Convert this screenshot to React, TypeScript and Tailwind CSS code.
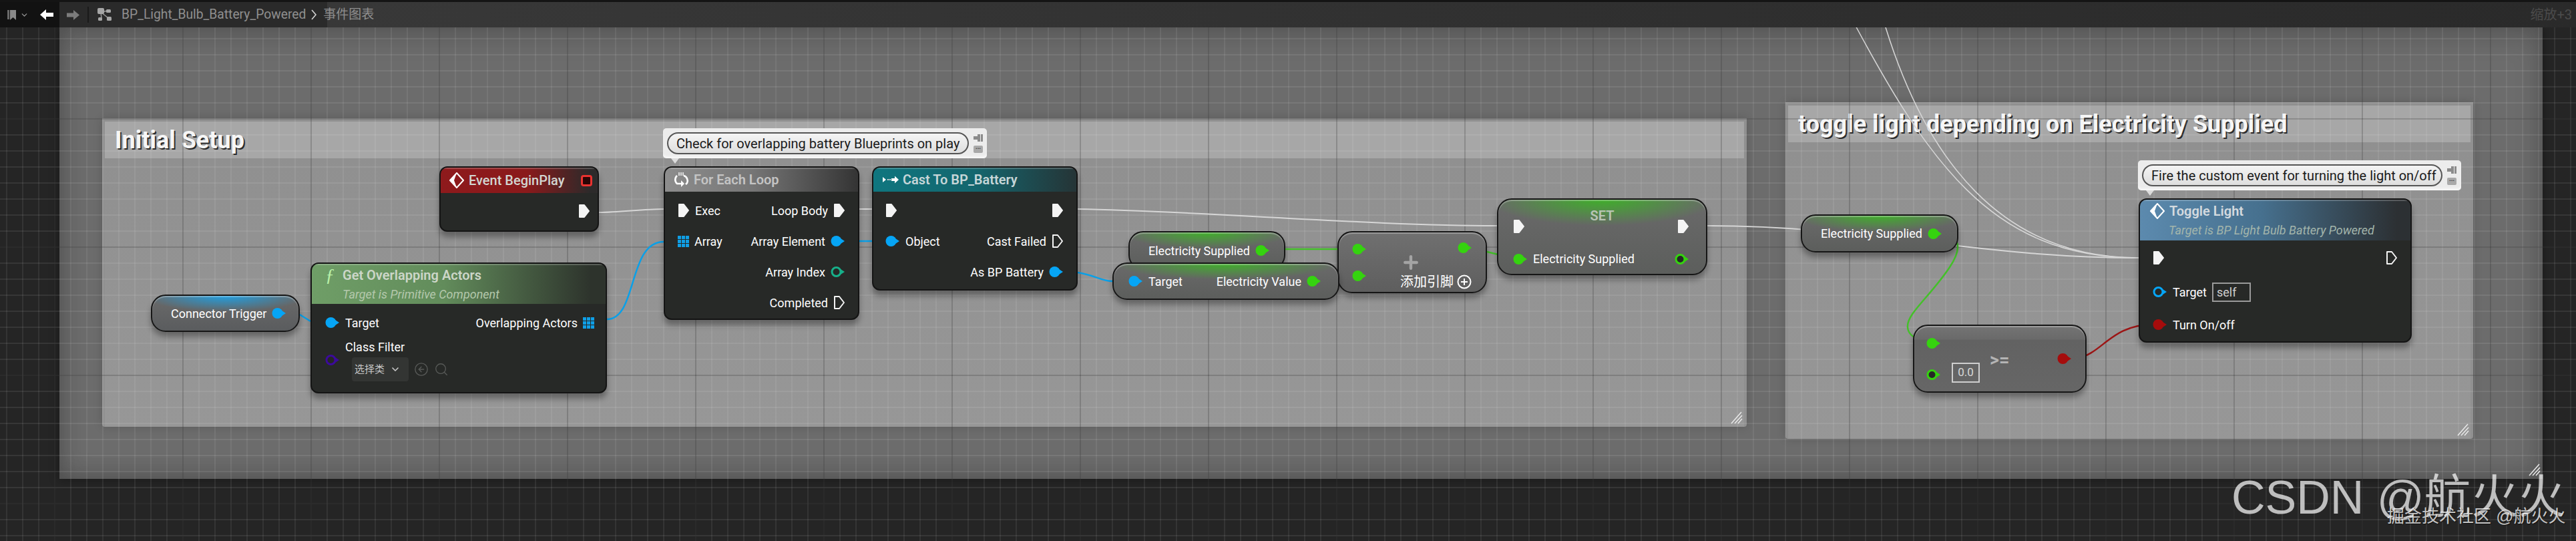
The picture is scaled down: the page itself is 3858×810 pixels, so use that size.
import type { ReactNode } from 'react'
import { CircleArrowLeft, Search, ChevronDown, Plus } from 'lucide-react'

const GREEN = '#35d30f'
const BLUE = '#06a5f5'

const ExecPin = ({ hollow = false }: { hollow?: boolean }) => (
  <svg width="18" height="22" viewBox="0 0 18 22" className="shrink-0">
    <path
      d="M2 2 H9 L16 11 L9 20 H2 Z"
      fill={hollow ? 'none' : '#f4f4f4'}
      stroke="#f4f4f4"
      strokeWidth="2"
      strokeLinejoin="round"
    />
  </svg>
)

const DataPin = ({ color, hollow = false }: { color: string; hollow?: boolean }) => (
  <svg width="22" height="18" viewBox="0 0 22 18" className="shrink-0">
    <path d="M15 5 L21 9 L15 13 Z" fill={color} />
    <circle
      cx="8.5"
      cy="9"
      r={hollow ? 6.5 : 8}
      fill={hollow ? '#262826' : color}
      stroke={hollow ? color : 'none'}
      strokeWidth={hollow ? 3 : 0}
    />
  </svg>
)

const ArrayPin = () => (
  <svg width="17" height="17" viewBox="0 0 17 17" className="shrink-0">
    {[0, 6, 12].map((x) =>
      [0, 6, 12].map((y) => (
        <rect key={`${x}-${y}`} x={x} y={y} width="5" height="5" fill="#0f9fe6" />
      )),
    )}
  </svg>
)

const EventIcon = () => (
  <svg width="22" height="24" viewBox="0 0 22 24" className="shrink-0">
    <path d="M11 1 L21 12 L11 23 L1 12 Z" fill="none" stroke="#fff" strokeWidth="2" />
    <path d="M11 1 L1 12 L11 23 L7 12 Z" fill="#fff" />
  </svg>
)

const LoopIcon = () => (
  <svg width="24" height="24" viewBox="0 0 24 24" className="shrink-0">
    <path d="M5 6 A8 8 0 0 0 5 18 L12 18" fill="none" stroke="#fff" strokeWidth="2.6" />
    <path d="M15 6 A8 8 0 0 1 20 17 L18 19" fill="none" stroke="#fff" strokeWidth="2.6" />
    <path d="M11 13 L16 18 L11 23 Z" fill="#fff" />
    <path d="M8 1 V6 M11 1 V6 M14 1 V6" stroke="#fff" strokeWidth="1.4" />
  </svg>
)

const CastIcon = () => (
  <svg width="24" height="14" viewBox="0 0 24 14" className="shrink-0">
    <path d="M0 3 L5 7 L0 11 Z" fill="#fff" />
    <path d="M7 6 H9 V8 H7 Z M10 6 H12 V8 H10 Z" fill="#ddd" />
    <path d="M13 5 H18 V1.5 L24 7 L18 12.5 V9 H13 Z" fill="#fff" />
  </svg>
)

const Delegate = () => (
  <span className="ml-auto mr-[8px] h-[17px] w-[17px] rounded-[4px] border-[3px] border-[#e8322f] bg-[#2a0505]" />
)

const Resize = ({ className }: { className: string }) => (
  <svg width="18" height="20" viewBox="0 0 18 20" className={`absolute ${className}`}>
    <path d="M1 19 L16 2 M6 19 L17 7 M11 19 L17 12" stroke="#e8e8e8" strokeWidth="1.6" />
  </svg>
)

const Node = ({ className, children }: { className: string; children: ReactNode }) => (
  <div
    className={`absolute flex flex-col overflow-hidden rounded-[12px] border-2 border-[#141414] bg-[#272927] shadow-[0_8px_9px_rgba(0,0,0,0.32)] ${className}`}
  >
    {children}
  </div>
)

const Header = ({ className, children }: { className: string; children: ReactNode }) => (
  <div
    className={`flex shrink-0 flex-col justify-center font-semibold text-[20px] text-[#d2d6d2] shadow-[inset_0_2px_1px_rgba(255,255,255,0.22)] ${className}`}
  >
    {children}
  </div>
)

const Row = ({ className = '', children }: { className?: string; children: ReactNode }) => (
  <div className={`flex h-[46px] items-center gap-[8px] ${className}`}>{children}</div>
)

const Pure = ({ className, children }: { className: string; children: ReactNode }) => (
  <div
    className={`absolute flex items-center rounded-[22px] border-2 border-[#161616] text-white shadow-[0_7px_8px_rgba(0,0,0,0.32),inset_0_2px_1px_rgba(255,255,255,0.3)] ${className}`}
  >
    {children}
  </div>
)

const Bubble = ({ className, pill, text }: { className: string; pill: string; text: string }) => (
  <div
    className={`absolute z-10 flex items-center rounded-[5px] bg-[#ececec] pl-[6px] shadow-[inset_0_-3px_3px_rgba(255,255,255,0.6)] after:absolute after:left-[12px] after:top-full after:h-0 after:w-0 after:border-x-[6px] after:border-t-[8px] after:border-x-transparent after:border-t-[#dcdcdc] ${className}`}
  >
    <div
      className={`flex h-[33px] items-center whitespace-nowrap rounded-full border-2 border-[#555] bg-[linear-gradient(#f4f4f4,#dedede)] pl-[12px] text-[20px] text-[#1a1a1a] ${pill}`}
    >
      {text}
    </div>
    <div className="ml-[7px] flex flex-col gap-[6px]">
      <svg width="14" height="11" viewBox="0 0 14 11">
        <path d="M0 3 L6 3 L6 0 L10 0 L10 11 L6 11 L6 8 L0 8 Z M11 0 H14 V11 H11 Z" fill="#8b8b8b" />
      </svg>
      <span className="flex h-[11px] w-[14px] items-center justify-center rounded-[2px] bg-[#a9a9a9] text-[8px] leading-none text-[#444]">
        •••
      </span>
    </div>
  </div>
)

const Comment = ({
  className,
  title,
  children,
}: {
  className: string
  title: string
  children?: ReactNode
}) => (
  <div
    className={`absolute rounded-b-[4px] border-t-[5px] border-x-[4px] border-[#909090] bg-[linear-gradient(#8f8f8f,#979797)] shadow-[0_0_14px_rgba(0,0,0,0.16)] ${className}`}
  >
    <div className="flex h-[55px] items-center bg-[#a7a7a7] pl-[15px] font-bold text-[36px] text-[#f6f6f6] [text-shadow:2px_2px_0_#2a2a2a]">
      {title}
    </div>
    {children}
  </div>
)

const Wires = () => (
  <svg width="3858" height="810" viewBox="0 0 3858 810" fill="none" className="absolute left-0 top-0">
    <g stroke="#d6d6d6" strokeWidth="2">
      <path d="M897 318 C930 318 960 313 994 313" />
      <path d="M1287 313 H1306" />
      <path d="M1614 313 C1800 316 2050 338 2242 338" />
      <path d="M2557 338 C2800 338 2960 386 3203 386" />
      <path d="M2760 3 C2885 240 2980 386 3203 386" strokeWidth="1.5" />
      <path d="M2813 3 C2880 250 3005 386 3203 386" strokeWidth="1.5" />
    </g>
    <g stroke="#0aa0e8" strokeWidth="2.5">
      <path d="M449 471 L465 481" />
      <path d="M909 478 C955 478 940 362 994 362" />
      <path d="M1287 361 H1306" />
      <path d="M1614 408 C1640 412 1650 421 1666 421" />
    </g>
    <g stroke="#44c02a" strokeWidth="2.5">
      <path d="M1925 373 H2031" />
      <path d="M1971 422 C2000 420 2010 413 2031 413" />
      <path d="M2194 370 C2230 375 2240 384 2273 384" />
      <path d="M2905 349 C2935 352 2940 370 2920 400 C2890 445 2855 470 2857 490 C2858 505 2875 510 2892 512" />
    </g>
    <path d="M3109 537 C3150 530 3160 486 3225 486" stroke="#9c1515" strokeWidth="2.5" />
  </svg>
)

const Toolbar = () => (
  <div className="absolute inset-x-0 top-0 z-20 flex h-[41px] items-center border-t-[3px] border-[#141414] bg-[linear-gradient(90deg,#2a2a2a_0%,#2a2a2a_12.7%,#383838_12.7%,#303030_60%,#2a2a2a_100%)] text-[#8f8f8f]">
    <div className="flex h-full w-[89px] shrink-0 items-center bg-[#121212] pl-[11px]">
      <svg width="13" height="17" viewBox="0 0 13 17">
        <path d="M0 1 H3 V15 H0 Z" fill="#6a6a6a" />
        <path d="M4 1 H13 V16 L8.5 12 L4 16 Z" fill="#8a8a8a" />
      </svg>
      <ChevronDown size={13} strokeWidth={2.4} className="ml-[6px] text-[#9a9a9a]" />
    </div>
    <svg width="20" height="16" viewBox="0 0 20 16" className="-ml-[29px] shrink-0">
      <path d="M9 0 V5 H20 V11 H9 V16 L0 8 Z" fill="#fff" />
    </svg>
    <svg width="19" height="15" viewBox="0 0 19 15" className="ml-[20px] shrink-0">
      <path d="M10 0 V4.5 H0 V10.5 H10 V15 L19 7.5 Z" fill="#7c7c7c" />
    </svg>
    <span className="ml-[12px] h-[24px] w-[2px] bg-[#1a1a1a]" />
    <svg width="21" height="20" viewBox="0 0 21 20" className="ml-[13px] shrink-0">
      <path d="M5 6 L16 4 M5 6 L6 16 M5 6 L16 15" stroke="#9a9a9a" strokeWidth="1.5" />
      <rect x="0" y="0" width="10" height="9" rx="2" fill="#a6a6a6" />
      <rect x="13" y="2" width="7" height="5" rx="1.5" fill="#a6a6a6" />
      <rect x="1" y="14" width="6" height="5" rx="1.5" fill="#a6a6a6" />
      <rect x="14" y="13" width="7" height="6" rx="1.5" fill="#a6a6a6" />
    </svg>
    <span className="ml-[15px] text-[19.3px]">BP_Light_Bulb_Battery_Powered</span>
    <svg width="10" height="20" viewBox="0 0 10 20" className="ml-[7px] shrink-0">
      <path d="M2 3 L8 10 L2 17" fill="none" stroke="#d4d4d4" strokeWidth="1.6" />
    </svg>
    <span className="ml-[9px] text-[19px]">事件图表</span>
    <span className="ml-auto mr-[6px] text-[20px] text-[#4a4a4a]">缩放+3</span>
  </div>
)

const labelRight = 'ml-auto text-right'

export default function App() {
  return (
    <div className="relative h-[810px] w-[3858px] overflow-hidden bg-[#252525] font-['Roboto','Noto_Sans_CJK_SC',sans-serif] text-[18px] text-white">
      {/* big backdrop comment */}
      <div className="absolute left-[89px] top-[41px] h-[676px] w-[3719px] bg-[#6c6c6c] shadow-[inset_0_10px_40px_rgba(0,0,0,0.22),inset_0_-12px_30px_rgba(0,0,0,0.12),0_0_14px_rgba(0,0,0,0.35)]">
        <Resize className="bottom-[4px] right-[3px]" />
      </div>

      <Comment className="left-[153px] top-[177px] h-[462px] w-[2463px]" title="Initial Setup">
        <Resize className="bottom-[4px] right-[2px]" />
      </Comment>
      <Comment
        className="left-[2674px] top-[153px] h-[504px] w-[1030px]"
        title="toggle light depending on Electricity Supplied"
      >
        <Resize className="bottom-[4px] right-[2px]" />
      </Comment>

      {/* graph paper */}
      <div className="pointer-events-none absolute inset-0 bg-[linear-gradient(90deg,rgba(0,0,0,0.2)_2px,transparent_2px),linear-gradient(rgba(0,0,0,0.2)_2px,transparent_2px),linear-gradient(90deg,rgba(255,255,255,0.07)_2px,transparent_2px),linear-gradient(rgba(255,255,255,0.08)_2px,transparent_2px)] bg-[size:192px_192px,192px_192px,24px_24px,24px_24px] bg-[position:81px_177px,81px_177px,9px_9px,9px_9px]" />

      <Wires />

      {/* Initial Setup */}
      <Pure className="left-[226px] top-[441px] h-[56px] w-[223px] bg-[radial-gradient(ellipse_55%_45%_at_50%_0%,#1f9ee0,transparent),linear-gradient(#6a6a6a,#5a5c5e)] pl-[28px]">
        <span>Connector Trigger</span>
        <span className="ml-[8px]">
          <DataPin color={BLUE} />
        </span>
      </Pure>

      <Node className="left-[658px] top-[249px] h-[98px] w-[239px]">
        <Header className="h-[38px] bg-[linear-gradient(90deg,#8e1a1c,#8a191b_55%,#2c2a2a_95%)]">
          <div className="flex items-center gap-[7px] pl-[13px] font-medium">
            <EventIcon />
            <span>Event BeginPlay</span>
            <Delegate />
          </div>
        </Header>
        <Row className="justify-end pr-[11px] pt-[8px]">
          <ExecPin />
        </Row>
      </Node>

      <Node className="left-[465px] top-[393px] h-[196px] w-[444px]">
        <Header className="h-[60px] bg-[linear-gradient(90deg,#6f9e67,#628c5b_45%,#2d332c_95%)]">
          <div className="flex items-center pl-[20px]">
            <span className="w-[26px] font-['Liberation_Serif',serif] text-[28px] font-normal italic leading-none text-[#b8f0a8]">
              ƒ
            </span>
            <span className="text-[#ccd6c8]">Get Overlapping Actors</span>
          </div>
          <div className="pl-[46px] text-[18px] font-normal italic text-[#b4c8ac]">
            Target is Primitive Component
          </div>
        </Header>
        <Row className="mt-[5px] pl-[20px] pr-[17px]">
          <DataPin color={BLUE} />
          <span>Target</span>
          <span className={labelRight}>Overlapping Actors</span>
          <ArrayPin />
        </Row>
        <div className="flex items-center pl-[20px]">
          <DataPin color="#3c0a9c" hollow />
          <div className="ml-[8px] flex flex-col">
            <span>Class Filter</span>
            <div className="ml-[10px] mt-[2px] flex items-center gap-[8px]">
              <div className="flex h-[36px] w-[85px] items-center gap-[8px] rounded-[4px] bg-[#333533] pl-[4px] text-[15px] text-[#c8c8c8]">
                <span>选择类</span>
                <ChevronDown size={16} strokeWidth={2.5} />
              </div>
              <CircleArrowLeft size={22} strokeWidth={1.5} className="text-[#585a58]" />
              <Search size={22} strokeWidth={1.5} className="text-[#585a58]" />
            </div>
          </div>
        </div>
      </Node>

      <Node className="left-[994px] top-[249px] h-[230px] w-[293px]">
        <Header className="h-[36px] bg-[linear-gradient(90deg,#8d8d8d,#767676_45%,#343434)]">
          <div className="flex items-center gap-[6px] pl-[13px]">
            <LoopIcon />
            <span className="text-[#c4c4c4]">For Each Loop</span>
          </div>
        </Header>
        <div className="flex flex-col pl-[19px] pr-[19px] pt-[5px]">
          <Row>
            <ExecPin />
            <span>Exec</span>
            <span className={labelRight}>Loop Body</span>
            <ExecPin />
          </Row>
          <Row>
            <ArrayPin />
            <span>Array</span>
            <span className={labelRight}>Array Element</span>
            <DataPin color={BLUE} />
          </Row>
          <Row>
            <span className={labelRight}>Array Index</span>
            <DataPin color="#17b08a" hollow />
          </Row>
          <Row>
            <span className={labelRight}>Completed</span>
            <ExecPin hollow />
          </Row>
        </div>
      </Node>

      <Node className="left-[1306px] top-[249px] h-[186px] w-[308px]">
        <Header className="h-[36px] bg-[linear-gradient(90deg,#0f767f,#14666e_50%,#253436)]">
          <div className="flex items-center gap-[6px] pl-[14px]">
            <CastIcon />
            <span className="text-[#c6d6d8]">Cast To BP_Battery</span>
          </div>
        </Header>
        <div className="flex flex-col pl-[18px] pr-[19px] pt-[5px]">
          <Row className="justify-between">
            <ExecPin />
            <ExecPin />
          </Row>
          <Row>
            <DataPin color={BLUE} />
            <span>Object</span>
            <span className={labelRight}>Cast Failed</span>
            <ExecPin hollow />
          </Row>
          <Row>
            <span className={labelRight}>As BP Battery</span>
            <DataPin color={BLUE} />
          </Row>
        </div>
      </Node>

      <Pure className="left-[1690px] top-[346px] h-[58px] w-[235px] bg-[radial-gradient(ellipse_55%_45%_at_50%_0%,#3fae2a,transparent),linear-gradient(#6a6a6a,#5c5e5c)] pl-[28px]">
        <span>Electricity Supplied</span>
        <span className="ml-[8px]">
          <DataPin color={GREEN} />
        </span>
      </Pure>

      <Pure className="left-[2003px] top-[346px] h-[93px] w-[224px] bg-[linear-gradient(#707070,#5e5e5e)]">
        <div className="flex h-full w-full flex-col pl-[20px] pr-[14px] pt-[16px]">
          <div className="flex">
            <DataPin color={GREEN} />
            <span className="ml-auto mr-[6px] -mt-[2px]">
              <DataPin color={GREEN} />
            </span>
          </div>
          <div className="mt-[22px] flex items-center">
            <DataPin color={GREEN} />
          </div>
        </div>
      </Pure>
      <div className="absolute left-[2098px] top-[378px] flex flex-col items-center">
        <Plus size={30} strokeWidth={3.5} className="text-[#a4a4a4]" />
      </div>
      <div className="absolute left-[2097px] top-[409px] flex items-center gap-[5px] text-[20px] leading-[26px]">
        <span>添加引脚</span>
        <svg width="22" height="22" viewBox="0 0 22 22">
          <circle cx="11" cy="11" r="9.5" fill="none" stroke="#fff" strokeWidth="2" />
          <path d="M11 6 V16 M6 11 H16" stroke="#fff" strokeWidth="2" />
        </svg>
      </div>

      <Pure className="left-[1666px] top-[393px] h-[56px] w-[340px] bg-[radial-gradient(ellipse_50%_45%_at_50%_0%,#3fae2a,transparent),linear-gradient(#6a6a6a,#5c5e5c)] pl-[22px] pr-[25px]">
        <DataPin color={BLUE} />
        <span className="ml-[8px]">Target</span>
        <span className={labelRight}>Electricity Value</span>
        <span className="ml-[8px]">
          <DataPin color={GREEN} />
        </span>
      </Pure>

      <Pure className="left-[2242px] top-[297px] h-[115px] w-[315px] bg-[radial-gradient(ellipse_55%_35%_at_50%_0%,#3fae2a,transparent),linear-gradient(#6a6a6a,#5c5e5c)]">
        <div className="flex h-full w-full flex-col pl-[22px] pr-[25px]">
          <div className="flex h-[59px] items-end justify-between pb-[8px]">
            <ExecPin />
            <ExecPin />
          </div>
          <div className="absolute inset-x-0 top-[9px] text-center font-semibold text-[20px] text-[#b8c4b6]">SET</div>
          <div className="mt-[16px] flex items-center">
            <DataPin color={GREEN} />
            <span className="ml-[8px]">Electricity Supplied</span>
            <span className="ml-auto">
              <DataPin color={GREEN} hollow />
            </span>
          </div>
        </div>
      </Pure>

      <Bubble
        className="left-[993px] top-[192px] h-[45px] w-[485px]"
        pill="w-[452px]"
        text="Check for overlapping battery Blueprints on play"
      />

      {/* toggle light */}
      <Pure className="left-[2697px] top-[321px] h-[57px] w-[236px] bg-[radial-gradient(ellipse_55%_45%_at_50%_0%,#3fae2a,transparent),linear-gradient(#6a6a6a,#5c5e5c)] pl-[28px]">
        <span>Electricity Supplied</span>
        <span className="ml-[8px]">
          <DataPin color={GREEN} />
        </span>
      </Pure>

      <Pure className="left-[2865px] top-[486px] h-[102px] w-[260px] bg-[linear-gradient(#747474_0%,#6a6a6a_20%,#626262_22%,#666_100%)] pl-[18px] pr-[20px]">
        <div className="flex flex-col gap-[29px]">
          <DataPin color={GREEN} />
          <DataPin color={GREEN} hollow />
        </div>
        <span className="absolute left-[56px] top-[55px] flex h-[30px] w-[42px] items-center justify-center border-2 border-[#cfcfcf] text-[17px] text-[#d8d8d8]">
          0.0
        </span>
        <span className="absolute left-[113px] top-[38px] text-[27px] font-bold leading-none text-[#b4b4b4]">
          {'>='}
        </span>
        <span className="ml-auto">
          <DataPin color="#a50c0c" />
        </span>
      </Pure>

      <Node className="left-[3203px] top-[297px] h-[216px] w-[409px]">
        <Header className="h-[61px] bg-[linear-gradient(90deg,#5c8aae,#46708e_45%,#2c3033_95%)]">
          <div className="flex items-center gap-[7px] pl-[15px]">
            <EventIcon />
            <span className="text-[#d4dadf]">Toggle Light</span>
          </div>
          <div className="pl-[43px] text-[18px] font-normal italic text-[#a3b5ab]">
            Target is BP Light Bulb Battery Powered
          </div>
        </Header>
        <div className="flex flex-col pl-[19px] pr-[19px]">
          <Row className="h-[52px] justify-between">
            <ExecPin />
            <ExecPin hollow />
          </Row>
          <Row className="h-[50px]">
            <DataPin color={BLUE} hollow />
            <span>Target</span>
            <span className="flex h-[29px] w-[58px] items-center border-2 border-[#9a9a9a] pl-[5px] text-[#cfcfcf]">
              self
            </span>
          </Row>
          <Row className="h-[48px]">
            <DataPin color="#a50c0c" />
            <span>Turn On/off</span>
          </Row>
        </div>
      </Node>

      <Bubble
        className="left-[3202px] top-[240px] h-[45px] w-[484px]"
        pill="w-[450px]"
        text="Fire the custom event for turning the light on/off"
      />

      <Toolbar />

      {/* watermarks */}
      <div className="pointer-events-none absolute left-[3342px] top-[700px] z-30 whitespace-nowrap font-['Liberation_Sans','Noto_Sans_CJK_SC',sans-serif] text-[70px] leading-[90px] text-white/70">
        CSDN @航火火
      </div>
      <div className="pointer-events-none absolute left-[3575px] top-[757px] z-30 whitespace-nowrap font-['Liberation_Sans','Noto_Sans_CJK_SC',sans-serif] text-[26px] leading-[32px] text-white/75 [text-shadow:1px_1px_1px_rgba(0,0,0,0.6)]">
        掘金技术社区 @航火火
      </div>
    </div>
  )
}
